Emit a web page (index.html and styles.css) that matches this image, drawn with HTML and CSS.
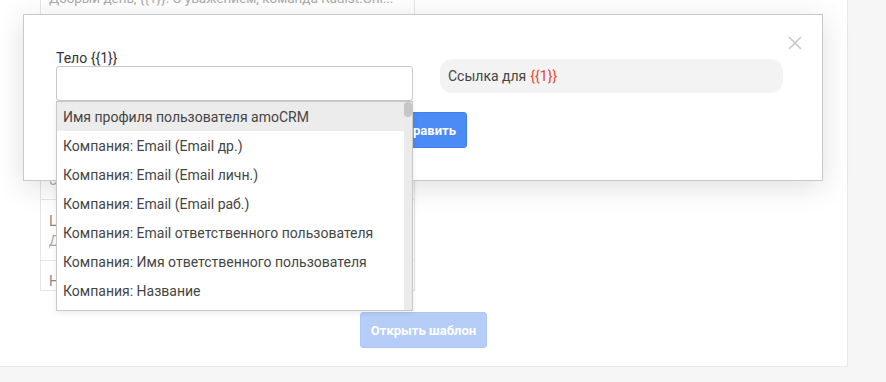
FILE: index.html
```html
<!DOCTYPE html>
<html lang="ru">
<head>
    <meta charset="UTF-8">
    <meta name="viewport" content="width=device-width, initial-scale=1.0">
    <title>Шаблоны</title>
    <link rel="stylesheet" href="styles.css">
</head>
<body>
    <div class="page">
        <div class="tpl-table">
            <div class="tpl-row tpl-row-first">
                <div class="tpl-text">Добрый день, {{1}}. С уважением, команда Radist.Onl...</div>
            </div>
            <div class="tpl-row tpl-row-tall">
                <div class="tpl-title">Приветствие</div>
                <div class="tpl-text">Здравствуйте, {{1}}! Рады видеть вас...</div>
            </div>
            <div class="tpl-row">
                <div class="tpl-title">Оплата</div>
                <div class="tpl-text">Ваш счёт на сумму {{1}} готов...</div>
            </div>
            <div class="tpl-row">
                <div class="tpl-title">Заказ</div>
                <div class="tpl-text">Этот заказ передан в доставку...</div>
            </div>
            <div class="tpl-row">
                <div class="tpl-title">Цены на услуги</div>
                <div class="tpl-text">Добрый день! Высылаем актуальный прайс...</div>
            </div>
            <div class="tpl-row tpl-row-last">
                <div class="tpl-title">Напоминание о встрече</div>
            </div>
        </div>

        <button class="open-btn" disabled>Открыть шаблон</button>

        <div class="modal">
            <svg class="modal-close" width="14" height="14" viewBox="0 0 14 14">
                <path d="M1 1 L13 13 M13 1 L1 13" stroke="#c9c9c9" stroke-width="1.7" fill="none"/>
            </svg>
            <div class="modal-body">
                <div class="fields">
                    <div class="field-left">
                        <label class="field-label">Тело {{1}}</label>
                        <input class="field-input" type="text">
                        <div class="dropdown">
                            <div class="dropdown-list" id="varList">
                                <div class="dropdown-item active">Имя профиля пользователя amoCRM</div>
                            </div>
                            <div class="dropdown-scroll">
                                <div class="dropdown-thumb"></div>
                            </div>
                        </div>
                    </div>
                    <div class="link-pill">Ссылка для <span class="var">{{1}}</span></div>
                </div>
                <button class="send-btn">Отправить</button>
            </div>
        </div>
    </div>

    <script>
        // fill the variables list
        const entities = ['Компания', 'Контакт', 'Сделка', 'Покупатель'];
        const fields = [
            'Email (Email др.)', 'Email (Email личн.)', 'Email (Email раб.)',
            'Email ответственного пользователя', 'Имя ответственного пользователя',
            'Название', 'Телефон (Телефон дом.)', 'Телефон (Телефон др.)',
            'Телефон (Телефон моб.)', 'Телефон (Телефон раб.)',
            'Телефон ответственного пользователя', 'Web', 'Адрес', 'Теги'
        ];
        const list = document.getElementById('varList');
        entities.forEach(function(entity) {
            fields.forEach(function(f) {
                const el = document.createElement('div');
                el.className = 'dropdown-item';
                el.textContent = entity + ': ' + f;
                list.appendChild(el);
            });
        });
    </script>
</body>
</html>
```

FILE: styles.css
```css
* {
    box-sizing: border-box;
}
body {
    margin: 0;
    background-color: #f6f6f6;
    font-family: Roboto, 'Liberation Sans', sans-serif;
    font-size: 14px;
    color: #333;
    overflow: hidden;
}
.page {
    position: relative;
    display: flow-root;
    width: 848px;
    height: 367px;
    background-color: #fff;
    border-right: 1px solid #e8e8e8;
    border-bottom: 1px solid #e8e8e8;
}
.tpl-table {
    width: 375px;
    margin: -17px 0 0 40px;
    border: 1px solid #e6e6e6;
}
.tpl-row {
    height: 61px;
    padding: 11px 8px 0;
    border-bottom: 1px solid #e6e6e6;
    line-height: 20px;
}
.tpl-row-first {
    height: 31px;
    padding-top: 4px;
    font-size: 13.5px;
}
.tpl-row-tall {
    height: 63px;
}
.tpl-row-last {
    height: 29px;
    padding-top: 10px;
    border-bottom: none;
}
.tpl-title {
    color: #888;
}
.tpl-text {
    color: #aaa;
    white-space: nowrap;
    overflow: hidden;
}
.tpl-row .tpl-title + .tpl-text {
    font-style: italic;
}
.open-btn {
    display: block;
    margin: 21px auto 0;
    height: 36px;
    padding: 0 10px;
    background-color: #b5cdf7;
    color: #fff;
    border: 1px solid #adc6f3;
    border-radius: 3px;
    font-family: inherit;
    font-size: 13px;
    font-weight: bold;
}
.modal {
    position: absolute;
    left: 23px;
    top: 14px;
    width: 800px;
    height: 167px;
    background-color: #fff;
    border: 1px solid #c9c9c9;
    box-shadow: 0 6px 28px rgba(0, 0, 0, 0.13);
}
.modal-close {
    position: absolute;
    right: 20px;
    top: 21px;
}
.modal-body {
    padding: 35px 32px 31px;
}
.fields {
    display: flex;
    align-items: center;
    gap: 27px;
}
.field-left {
    position: relative;
    width: 357px;
}
.field-label {
    display: block;
    line-height: 16px;
    color: #333;
}
.field-input {
    display: block;
    width: 100%;
    height: 35px;
    border: 1px solid #c8c8c8;
    border-radius: 3px;
    font-family: inherit;
    font-size: 14px;
}
.dropdown {
    position: absolute;
    top: 100%;
    left: 0;
    width: 357px;
    height: 210px;
    display: flex;
    background-color: #fff;
    border: 1px solid #c8c8c8;
    box-shadow: 0 2px 6px rgba(0, 0, 0, 0.08);
    z-index: 2;
}
.dropdown-list {
    flex: 1;
    overflow: hidden;
}
.dropdown-scroll {
    width: 8px;
    background-color: #ebebeb;
}
.dropdown-thumb {
    height: 15px;
    background-color: #c6c6c6;
    border-radius: 4px;
}
.dropdown-item {
    padding: 6px 6px 4px;
    line-height: 19px;
    color: #454545;
    white-space: nowrap;
}
.dropdown-item.active {
    background-color: #ececec;
}
.link-pill {
    width: 343px;
    height: 34px;
    display: flex;
    align-items: center;
    padding: 0 8px;
    background-color: #f3f3f3;
    border-radius: 12px;
    color: #444;
}
.var {
    color: #e8452f;
    margin-left: 4px;
}
.send-btn {
    display: block;
    margin: 11px auto 0;
    height: 36px;
    padding: 0 10px;
    background-color: #4b8bf5;
    color: #fff;
    border: 1px solid #3f80ec;
    border-radius: 3px;
    font-family: inherit;
    font-size: 13px;
    font-weight: bold;
}
```
